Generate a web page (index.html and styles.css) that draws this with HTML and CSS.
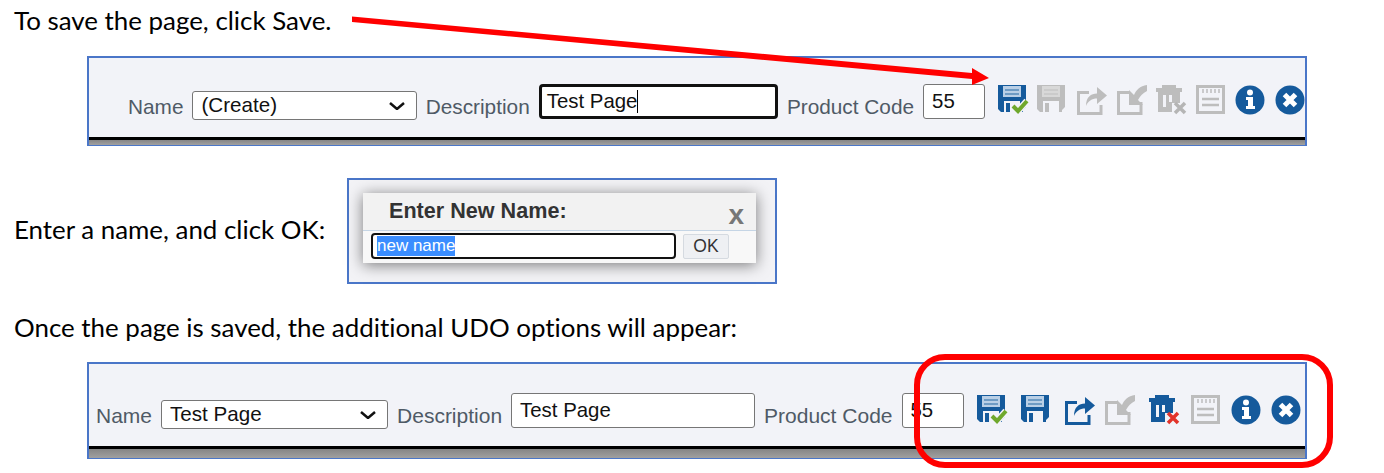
FILE: index.html
```html
<!DOCTYPE html>
<html lang="en">

<head>
    <meta charset="UTF-8">
    <title>Saving a UDO page</title>
    <link rel="stylesheet" href="styles.css">
</head>

<body>
    <svg width="0" height="0" class="defs">
        <symbol id="i-disk" viewBox="0 0 30 30">
            <path d="M0 0H28V22L25 25V27H3L0 24Z" fill="currentColor" />
            <rect x="5" y="1" width="18" height="11" fill="var(--label)" />
            <rect x="7" y="4" width="14" height="2" fill="currentColor" opacity=".45" />
            <rect x="7" y="8" width="14" height="2" fill="currentColor" opacity=".45" />
            <rect x="6" y="16" width="16" height="11" fill="var(--hole)" />
            <rect x="8" y="18" width="4" height="9" fill="currentColor" />
        </symbol>
        <symbol id="i-check" viewBox="0 0 18 16">
            <path d="M2 8L7 13L16 3" fill="none" stroke="#f2f3f8" stroke-width="7" />
            <path d="M2 8L7 13L16 3" fill="none" stroke="#6fa82c" stroke-width="4" />
        </symbol>
        <symbol id="i-share" viewBox="0 0 30 30">
            <path d="M12 7.500H1.500V28.500H24V20" fill="none" stroke="currentColor" stroke-width="3" />
            <path d="M9 21C9 12 14 8.500 20 8.500V2L30 10.500L20 19V13.500C15 13.500 11 16 9 21Z" fill="currentColor" />
        </symbol>
        <symbol id="i-import" viewBox="0 0 30 30">
            <path d="M13 7.500H1.500V28.500H24V17" fill="none" stroke="currentColor" stroke-width="3" />
            <path d="M30 0C23 1 19 5 17 10L12 5V20H26L21 15C23 11 26 8 30 6Z" fill="currentColor" />
        </symbol>
        <symbol id="i-trash" viewBox="0 0 30 30">
            <path d="M6 3V0H20V3H26V7H24V18H16V27H2V7H0V3Z" fill="currentColor" />
            <rect x="7" y="10" width="3" height="12" fill="var(--hole)" />
            <rect x="13" y="10" width="3" height="7" fill="var(--hole)" />
        </symbol>
        <symbol id="i-notes" viewBox="0 0 30 30">
            <rect x="1.500" y="1.500" width="26" height="26" fill="none" stroke="currentColor" stroke-width="3" />
            <path d="M7 4V8M11 4V8M15 4V8M19 4V8M23 4V8" stroke="currentColor" stroke-width="1.500" />
            <path d="M6 14H23M6 20H23" stroke="currentColor" stroke-width="2.500" />
        </symbol>
        <symbol id="i-info" viewBox="0 0 30 30">
            <circle cx="15" cy="15" r="14.500" fill="currentColor" />
            <circle cx="15" cy="7.500" r="3" fill="#fff" />
            <path d="M11 12H18V21H20V24H11V21H13V15H11Z" fill="#fff" />
        </symbol>
        <symbol id="i-close" viewBox="0 0 30 30">
            <circle cx="15" cy="15" r="14.500" fill="currentColor" />
            <path d="M9.500 9.500L20.500 20.500M20.500 9.500L9.500 20.500" stroke="#fff" stroke-width="5" />
        </symbol>
    </svg>

    <main class="page">
        <p class="doc-text first">To save the page, click Save.</p>

        <section class="bar bar-new">
            <span class="bar-label">Name</span>
            <select class="name-select">
                <option>(Create)</option>
            </select>
            <span class="bar-label">Description</span>
            <div class="field field-focus field-desc">Test Page<span class="caret"></span></div>
            <span class="bar-label">Product Code</span>
            <div class="field field-code">55</div>
            <div class="icons">
                <span class="icon blue"><svg><use href="#i-disk" /></svg><svg class="badge badge-check"><use href="#i-check" /></svg></span>
                <span class="icon off"><svg><use href="#i-disk" /></svg></span>
                <span class="icon off"><svg><use href="#i-share" /></svg></span>
                <span class="icon off"><svg><use href="#i-import" /></svg></span>
                <span class="icon off"><svg><use href="#i-trash" /></svg><svg class="badge" viewBox="0 0 14 14"><path d="M2 2L12 12M12 2L2 12" stroke="#b5b5b5" stroke-width="3.500" /></svg></span>
                <span class="icon off"><svg><use href="#i-notes" /></svg></span>
                <span class="icon blue"><svg><use href="#i-info" /></svg></span>
                <span class="icon blue"><svg><use href="#i-close" /></svg></span>
            </div>
        </section>

        <div class="name-row">
            <p class="doc-text name-row-label">Enter a name, and click OK:</p>
            <section class="dialog-shot">
                <div class="dialog">
                    <div class="dialog-head">
                        <span class="dialog-title">Enter New Name:</span>
                        <span class="dialog-x">x</span>
                    </div>
                    <div class="dialog-body">
                        <div class="dialog-input"><span class="selected">new name</span></div>
                        <button class="dialog-ok">OK</button>
                    </div>
                </div>
            </section>
        </div>

        <p class="doc-text third">Once the page is saved, the additional UDO options will appear:</p>

        <section class="bar bar-saved">
            <span class="bar-label">Name</span>
            <select class="name-select">
                <option>Test Page</option>
            </select>
            <span class="bar-label">Description</span>
            <div class="field field-desc">Test Page</div>
            <span class="bar-label">Product Code</span>
            <div class="field field-code">55</div>
            <div class="icons">
                <span class="icon blue pad-4"><svg><use href="#i-disk" /></svg><svg class="badge badge-check"><use href="#i-check" /></svg></span>
                <span class="icon blue pad-4"><svg><use href="#i-disk" /></svg></span>
                <span class="icon blue"><svg><use href="#i-share" /></svg></span>
                <span class="icon off pad-4"><svg><use href="#i-import" /></svg></span>
                <span class="icon blue pad-2"><svg><use href="#i-trash" /></svg><svg class="badge" viewBox="0 0 14 14"><path d="M2 2L12 12M12 2L2 12" stroke="#e2332a" stroke-width="3.500" /></svg></span>
                <span class="icon off"><svg><use href="#i-notes" /></svg></span>
                <span class="icon blue"><svg><use href="#i-info" /></svg></span>
                <span class="icon blue"><svg><use href="#i-close" /></svg></span>
            </div>
        </section>
    </main>

    <!-- Callouts drawn on top of the screenshot -->
    <svg class="callouts" width="1384" height="473" viewBox="0 0 1384 473">
        <path d="M352 16.500L972 73L972 68L989 78L972 85L972 79L352 22Z" fill="#f00" />
        <rect x="917" y="357" width="413" height="108" rx="28" fill="none" stroke="#f00" stroke-width="6" />
    </svg>
</body>

</html>
```

FILE: styles.css
```css
body {
    margin: 0;
    background-color: white;
    color: black;
    font-family: "Liberation Sans", Arial, sans-serif;
}

.defs {
    position: absolute;
}

.page {
    width: 1384px;
    height: 473px;
    padding-left: 14px;
    box-sizing: border-box;
    overflow: hidden;
}

.doc-text {
    margin: 0;
    font-family: Lato, "Open Sans", sans-serif;
    font-size: 25.900px;
    font-variant-ligatures: none;
    line-height: 28px;
}

.first {
    padding-top: 6px;
    margin-bottom: 22px;
}

.third {
    margin-top: 29px;
    margin-bottom: 21px;
}

/* Toolbar screenshots */
.bar {
    display: flex;
    align-items: flex-end;
    gap: 9px;
    width: 1220px;
    margin-left: 73px;
    box-sizing: border-box;
    border: 2px solid #4a76c8;
    border-bottom-width: 1px;
    background-color: #f2f3f8;
    overflow: hidden;
    position: relative;
    white-space: nowrap;
}

.bar::after {
    content: "";
    position: absolute;
    left: 0;
    right: 0;
    bottom: 0;
    border-top: 3px solid black;
    background: linear-gradient(#858585, #a0a0a0);
}

.bar-new {
    height: 90px;
    padding: 0 0 25px 39px;
    font-size: 20.800px;
}

.bar-new::after {
    height: 5px;
}

.bar-saved {
    height: 97px;
    padding: 0 0 29px 7px;
    font-size: 21px;
}

.bar-saved::after {
    height: 9px;
}

.bar-label {
    margin-bottom: 1px;
    color: #4f5a66;
    line-height: 24px;
}

.name-select {
    appearance: none;
    width: 225px;
    height: 29px;
    padding: 0 0 2px 8px;
    border: 1px solid #767676;
    border-radius: 3px;
    background: white url("data:image/svg+xml,%3Csvg xmlns='http://www.w3.org/2000/svg' width='16' height='8'%3E%3Cpath d='M1 1L8 7L15 1' fill='none' stroke='%23111' stroke-width='2.500'/%3E%3C/svg%3E") no-repeat right 11px center;
    color: #111;
    font-family: inherit;
    font-size: 20.600px;
}

.bar-saved .name-select {
    width: 227px;
}

.field {
    display: flex;
    align-items: center;
    height: 35px;
    margin-bottom: 1px;
    padding-left: 8px;
    box-sizing: border-box;
    border: 1px solid #767676;
    border-radius: 3px;
    background-color: white;
    color: #111;
    font-size: 20.400px;
}

.field-desc {
    width: 244px;
}

.field-code {
    width: 62px;
}

.field-focus {
    border: 3px solid #111;
    border-radius: 4px;
    padding-left: 5px;
}

.bar-new .field-desc {
    width: 240px;
}

.caret {
    width: 1px;
    height: 23px;
    background-color: black;
}

.icons {
    display: flex;
    gap: 9.600px;
    margin-left: 4px;
    margin-bottom: 5px;
}

.bar-saved .icons {
    gap: 10px;
    margin-left: 4.600px;
    margin-bottom: 4px;
}

.icon {
    --label: #b9cfe6;
    --hole: #f2f3f8;
    position: relative;
    display: block;
    width: 30px;
    height: 30px;
    filter: blur(0.500px);
}

.icon>svg {
    display: block;
    width: 30px;
    height: 30px;
}

.icon>svg.badge {
    position: absolute;
    right: -1px;
    bottom: 0;
    width: 14px;
    height: 14px;
}

.icon>svg.badge-check {
    right: -1px;
    bottom: 1px;
    width: 18px;
    height: 16px;
}

.blue {
    color: #155a9c;
}

.off {
    --label: #d8d8d8;
    color: #bdbdbd;
}

.pad-4 {
    margin-right: 4px;
}

.pad-2 {
    margin-right: 2px;
}

/* New name dialog */
.name-row {
    display: flex;
    align-items: center;
    margin-top: 32px;
}

.name-row-label {
    flex: 0 0 333px;
    margin-bottom: 5px;
}

.dialog-shot {
    width: 430px;
    height: 106px;
    padding: 13px 19px 0 14px;
    box-sizing: border-box;
    border: 2px solid #4a76c8;
    background-color: #f3f3f6;
}

.dialog {
    height: 70px;
    background-color: #f8f8f8;
    box-shadow: 0 2px 14px rgba(0, 0, 0, 0.5);
}

.dialog-head {
    display: flex;
    justify-content: space-between;
    align-items: center;
    height: 38px;
    padding: 0 12px 2px 26px;
    box-sizing: border-box;
    border-bottom: 1px solid #c5d5e5;
    background-color: #f2f2f2;
}

.dialog-title {
    color: #333;
    font-size: 21.600px;
    font-weight: bold;
}

.dialog-x {
    padding-top: 8px;
    color: #777;
    font-size: 28px;
    font-weight: bold;
}

.dialog-body {
    display: flex;
    align-items: center;
    gap: 7px;
    padding: 2px 0 0 8px;
}

.dialog-input {
    display: flex;
    align-items: center;
    width: 305px;
    height: 26px;
    padding-left: 4px;
    box-sizing: border-box;
    border: 2px solid #111;
    border-radius: 4px;
    background-color: white;
    font-size: 17px;
}

.selected {
    background-color: #3a8dff;
    color: white;
}

.dialog-ok {
    width: 46px;
    height: 25px;
    padding: 0;
    border: 1px solid #d5dae0;
    border-radius: 2px;
    background-color: #eef0f3;
    color: #333;
    font-family: inherit;
    font-size: 17.500px;
}

.callouts {
    position: absolute;
    top: 0;
    left: 0;
    pointer-events: none;
}
```
